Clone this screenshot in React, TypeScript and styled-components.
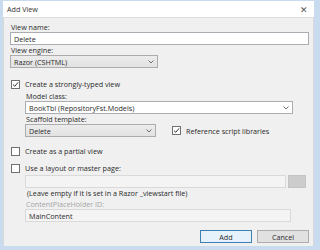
import React from 'react'
import styled, { createGlobalStyle } from 'styled-components'

const GlobalStyle = createGlobalStyle`
  html, body {
    margin: 0;
    padding: 0;
    background: #ffffff;
  }
  body {
    font-family: "Open Sans", "Liberation Sans", Arial, sans-serif;
    font-size: 7.2px;
    color: #2a2a2a;
  }
`

const Frame = styled.div`
  width: 320px;
  height: 250px;
  box-sizing: border-box;
  background: #c9dcef;
  padding: 1px 6px 4px 3px;
  display: flex;
  flex-direction: column;
`

const TitleBar = styled.div`
  height: 16px;
  background: #ffffff;
  display: flex;
  align-items: center;
  justify-content: space-between;
  padding: 0 6px 0 4px;
  color: #333;
`

const CloseX = styled.span`
  font-size: 9px;
  color: #555;
`

const Body = styled.div`
  flex: 1;
  background: #f0f0f0;
  border-top: 1px solid #dcdcdc;
  border-left: 1px solid #d8d8d8;
  border-right: 1px solid #d8d8d8;
  padding: 4px 4px 0 6px;
  display: flex;
  flex-direction: column;
`

const Label = styled.div<{ $disabled?: boolean }>`
  height: 10px;
  line-height: 10px;
  padding-left: 1px;
  white-space: nowrap;
  color: ${(p) => (p.$disabled ? '#a5a5a5' : '#2a2a2a')};
`

const TextBox = styled.div<{ $width?: number; $disabled?: boolean }>`
  height: 13px;
  box-sizing: border-box;
  width: ${(p) => (p.$width ? `${p.$width}px` : '100%')};
  background: ${(p) => (p.$disabled ? '#f4f4f4' : '#ffffff')};
  border: 1px solid ${(p) => (p.$disabled ? '#d9d9d9' : '#abadb3')};
  display: flex;
  align-items: center;
  justify-content: space-between;
  padding: 0 3px;
  white-space: nowrap;
`

const Combo = styled.div<{ $width: number }>`
  height: 13px;
  box-sizing: border-box;
  width: ${(p) => p.$width}px;
  background: linear-gradient(#ececec, #e2e2e2);
  border: 1px solid #acacac;
  display: flex;
  align-items: center;
  justify-content: space-between;
  padding: 0 3px;
`

const Arrow = styled.svg`
  width: 6px;
  height: 4px;
  flex-shrink: 0;
`

const CheckRow = styled.div<{ $top: number }>`
  display: flex;
  align-items: center;
  gap: 5px;
  margin-top: ${(p) => p.$top}px;
  height: 10px;
  padding-left: 1px;
  white-space: nowrap;
`

const Box = styled.span`
  width: 9px;
  height: 9px;
  box-sizing: border-box;
  border: 1px solid #707070;
  background: #ffffff;
  display: flex;
  align-items: center;
  justify-content: center;
  flex-shrink: 0;
`

const Indent = styled.div`
  padding-left: 15px;
  display: flex;
  flex-direction: column;
`

const Gap = styled.div<{ $h: number }>`
  height: ${(p) => p.$h}px;
`

const Row = styled.div`
  display: flex;
  align-items: center;
  gap: 15px;
`

const BrowseRow = styled.div`
  display: flex;
  gap: 2px;
`

const Browse = styled.div`
  width: 18px;
  height: 13px;
  background: #cccccc;
  border: 1px solid #c4c4c4;
  box-sizing: border-box;
`

const Note = styled.div`
  height: 11px;
  line-height: 10px;
  padding-left: 2px;
  white-space: nowrap;
`

const Footer = styled.div`
  display: flex;
  justify-content: flex-end;
  gap: 5px;
  margin-top: 8px;
`

const Button = styled.div<{ $primary?: boolean }>`
  width: 52px;
  height: 13px;
  box-sizing: border-box;
  background: ${(p) => (p.$primary ? '#e5f1fb' : '#e1e1e1')};
  border: 1px solid ${(p) => (p.$primary ? '#3c7fb1' : '#adadad')};
  display: flex;
  align-items: center;
  justify-content: center;
`

const Down = () => (
  <Arrow viewBox="0 0 6 4">
    <path d="M0.5 0.5 L3 3 L5.5 0.5" fill="none" stroke="#606060" strokeWidth="0.9" />
  </Arrow>
)

const Check = ({ checked }: { checked?: boolean }) => (
  <Box>
    {checked && (
      <svg width="7" height="7" viewBox="0 0 7 7">
        <path d="M1 3.6 L2.8 5.3 L6 1.4" fill="none" stroke="#333" strokeWidth="1" />
      </svg>
    )}
  </Box>
)

const App: React.FC = () => {
  return (
    <>
      <GlobalStyle />
      <Frame>
        <TitleBar>
          <span>Add View</span>
          <CloseX>✕</CloseX>
        </TitleBar>
        <Body>
          <Label>View name:</Label>
          <TextBox>Delete</TextBox>
          <Label>View engine:</Label>
          <Combo $width={148}>
            <span>Razor (CSHTML)</span>
            <Down />
          </Combo>

          <CheckRow $top={11}>
            <Check checked />
            <span>Create a strongly-typed view</span>
          </CheckRow>
          <Indent>
            <Gap $h={2} />
            <Label>Model class:</Label>
            <TextBox $width={268}>
              <span>BookTbl (RepositoryFst.Models)</span>
              <Down />
            </TextBox>
            <Label>Scaffold template:</Label>
            <Row>
              <Combo $width={131}>
                <span>Delete</span>
                <Down />
              </Combo>
              <CheckRow $top={0}>
                <Check checked />
                <span>Reference script libraries</span>
              </CheckRow>
            </Row>
          </Indent>

          <CheckRow $top={9}>
            <Check />
            <span>Create as a partial view</span>
          </CheckRow>
          <CheckRow $top={7}>
            <Check />
            <span>Use a layout or master page:</span>
          </CheckRow>
          <Indent>
            <Gap $h={2} />
            <BrowseRow>
              <TextBox $width={261} $disabled />
              <Browse />
            </BrowseRow>
            <Note>(Leave empty if it is set in a Razor _viewstart file)</Note>
            <Label $disabled>ContentPlaceHolder ID:</Label>
            <TextBox $width={266} $disabled>MainContent</TextBox>
          </Indent>

          <Footer>
            <Button $primary>Add</Button>
            <Button>Cancel</Button>
          </Footer>
        </Body>
      </Frame>
    </>
  )
}

export default App
